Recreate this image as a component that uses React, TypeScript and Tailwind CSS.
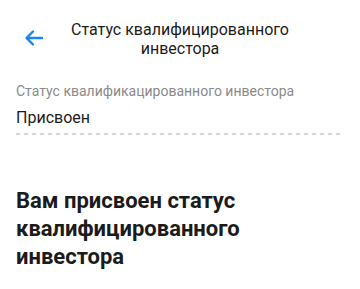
import React from 'react';

const BackArrow: React.FC = () => (
    <svg width="24" height="24" viewBox="0 0 24 24" fill="none">
        <path
            d="M20 12H5M11 5.5L4.5 12L11 18.5"
            stroke="#1a84f5"
            strokeWidth="2.4"
            strokeLinecap="round"
            strokeLinejoin="round"
        />
    </svg>
);

const dashes = Array.from({ length: 41 });

const App: React.FC = () => {
    return (
        <div className="w-[360px] h-[289px] bg-white overflow-hidden" style={{ fontFamily: 'Roboto, "Noto Sans", sans-serif' }}>
            <div className="relative flex items-center justify-center h-[78px] pt-[1px]">
                <button className="absolute left-[22px] top-[26px] w-6 h-6 flex items-center justify-center">
                    <BackArrow />
                </button>
                <div className="text-center text-[16px] leading-[19px] text-[#1b1b1b] px-[60px] -mt-[1px]">
                    Статус квалифицированного инвестора
                </div>
            </div>

            <div className="px-4">
                <div className="text-[14px] leading-[17px] text-[#8a8a8a] pt-[5px]">Статус квалификацированного инвестора</div>
                <div className="text-[16px] leading-[19px] text-[#1b1b1b] mt-[8px]">Присвоен</div>
                <div className="mt-[6px] flex gap-[4px] h-[2px] overflow-hidden">
                    {dashes.map((_, i) => (
                        <div key={i} className="w-[4px] h-[2px] shrink-0 bg-[#d6d6d6]"></div>
                    ))}
                </div>
            </div>

            <div className="px-4 pt-[52px]">
                <h1 className="text-[22px] leading-[28px] font-bold text-[#1b1b1b]">
                    Вам присвоен статус квалифицированного инвестора
                </h1>
            </div>
        </div>
    );
};

export default App;
